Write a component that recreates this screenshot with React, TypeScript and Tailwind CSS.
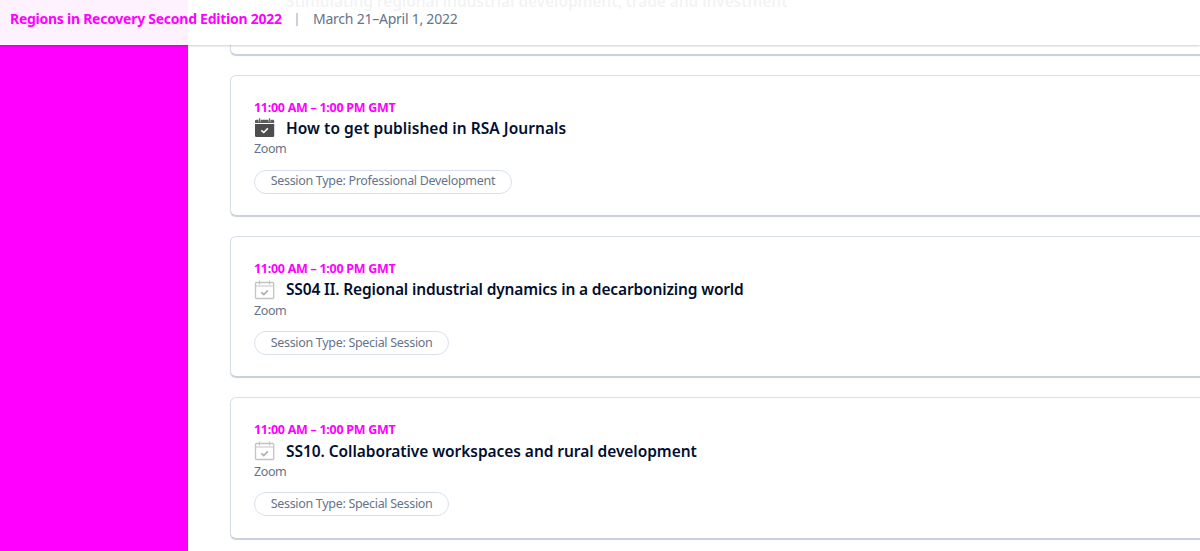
import React from 'react'
import clsx from 'clsx'

type Session = {
  title: string
  tracking: string
  time: string
  location: string
  tag?: string
  added?: boolean
}

const TIME = '11:00 AM – 1:00 PM GMT'

const sessions: Session[] = [
  { title: 'Stimulating regional industrial development, trade and investment', tracking: 'tracking-[-0.07px]', time: TIME, location: 'Zoom' },
  { title: 'How to get published in RSA Journals', tracking: 'tracking-[0.05px]', time: TIME, location: 'Zoom', tag: 'Session Type: Professional Development', added: true },
  { title: 'SS04 II. Regional industrial dynamics in a decarbonizing world', tracking: 'tracking-[-0.15px]', time: TIME, location: 'Zoom', tag: 'Session Type: Special Session' },
  { title: 'SS10. Collaborative workspaces and rural development', tracking: 'tracking-[-0.055px]', time: TIME, location: 'Zoom', tag: 'Session Type: Special Session' },
]

function CalendarIcon({ added }: { added?: boolean }) {
  if (added) {
    return (
      <svg width="21" height="20" viewBox="0 0 21 20" fill="none" className="shrink-0">
        <path d="M1 3Q1 1.8 2.2 1.8H19Q20.2 1.8 20.2 3V5H1Z" fill="#5c5c5c" />
        <path d="M1 6H20.2V17.7Q20.2 19 18.9 19H2.3Q1 19 1 17.7Z" fill="#4d4d4d" />
        <path d="M5.5 .6V4M15.5 .6V4" stroke="#ddd" strokeWidth="2" />
        <path d="M5.5 .3V4M15.5 .3V4" stroke="#666" strokeWidth="1" />
        <path d="M7.3 12.3L9.8 14.5L13.8 10.4" stroke="#fff" strokeWidth="1.6" />
      </svg>
    )
  }
  return (
    <svg width="21" height="20" viewBox="0 0 21 20" fill="none" stroke="#c4c4c4" className="shrink-0">
      <rect x="1.5" y="2.5" width="18.2" height="16" rx="1" strokeWidth="1.3" />
      <path d="M1.5 6H19.7" />
      <path d="M5.5 .5V4.4M15.5 .5V4.4" strokeWidth="1.2" />
      <path d="M7.3 12.3L9.8 14.5L13.8 10.4" stroke="#b0b0b0" strokeWidth="1.7" />
    </svg>
  )
}

function SessionCard({ session }: { session: Session }) {
  return (
    <article className="w-[1000px] shrink-0 rounded-md border border-[#d8dfec] border-b-[#c8d0dc] bg-white px-[23px] pt-[22px] pb-[21.3px] shadow-[0_1px_1px_#c8cedb]">
      <div className="h-5 whitespace-nowrap text-[12.5px] leading-5 font-bold tracking-[-0.28px] text-[#ff00ff]">{session.time}</div>
      <div className="flex h-[21.5px] items-center">
        <CalendarIcon added={session.added} />
        <h3 className={clsx('ml-[11px] whitespace-nowrap text-[15.5px] leading-[21px] font-semibold text-[#020f30]', session.tracking)}>{session.title}</h3>
      </div>
      <div className="h-5 text-[12.5px] leading-5 tracking-[-0.4px] text-[#64748b]">{session.location}</div>
      {session.tag && (
        <div className="mt-[10.5px] flex">
          <span className="flex h-6 items-center whitespace-nowrap rounded-full border border-[#d8e0ee] px-[15.7px] text-[12.5px] tracking-[-0.31px] text-[#64748b]">{session.tag}</span>
        </div>
      )}
    </article>
  )
}

export default function App() {
  return (
    <div className="relative flex h-[551px] w-[1200px] overflow-hidden bg-white font-['Noto_Sans',sans-serif]">
      <aside className="w-[188.4px] shrink-0 bg-[#ff00ff]" />
      <main className="-mt-[52.1px] ml-[41.6px] flex flex-col gap-[20px]">
        {sessions.map(s => <SessionCard key={s.title} session={s} />)}
      </main>
      <header className="absolute inset-x-0 top-0 flex h-[45px] items-start bg-white/95 pt-[9px] pl-[10px] text-sm leading-5 shadow-[0_1px_2px_rgba(0,0,0,0.2)]">
        <span className="w-[272px] whitespace-nowrap font-bold tracking-[-0.26px] text-[#ff00ff]">Regions in Recovery Second Edition 2022</span>
        <span className="mt-1 ml-[14px] h-[13px] w-[2px] bg-[#cbd0da]" />
        <span className="ml-[15px] whitespace-nowrap tracking-[-0.24px] text-[#64748b]">March 21–April 1, 2022</span>
      </header>
    </div>
  )
}
